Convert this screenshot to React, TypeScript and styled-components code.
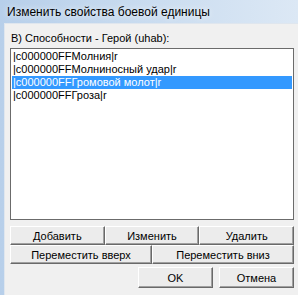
import React, {useState} from 'react'
import styled, {createGlobalStyle} from 'styled-components'

const GlobalStyle = createGlobalStyle`
  html, body {
    margin: 0;
    padding: 0;
    background: #f0f0f0;
  }
`

const Window = styled.div`
  width: 298px;
  height: 295px;
  overflow: hidden;
  display: flex;
  flex-direction: column;
  background: linear-gradient(90deg, #b7cfea 0%, #c8dbef 45%, #dce8f5 100%);
  font-family: "Liberation Sans", Arial, sans-serif;
`

const TitleBar = styled.div`
  height: 23px;
  flex: 0 0 23px;
  display: flex;
  align-items: center;
  padding-left: 7px;
  font-family: "Liberation Sans", Arial, sans-serif;
  font-size: 12px;
  color: #000;
  text-shadow: 0 0 6px rgba(255, 255, 255, 0.9);
`

const Body = styled.div`
  flex: 1;
  display: flex;
  padding-left: 4px;
`

const Client = styled.div`
  flex: 1;
  background: #f0f0f0;
  border-left: 1px solid #dfe6ee;
  border-top: 1px solid #dfe6ee;
  display: flex;
  flex-direction: column;
  padding: 8px 4px 0 5px;
`

const GroupLabel = styled.div`
  font-size: 11px;
  line-height: 13px;
  color: #000;
  margin: 0 0 2px 1px;
  height: 14px;
`

const ListBox = styled.div`
  height: 168px;
  background: #fff;
  border: 1px solid #6b6b6b;
  padding: 1px;
  display: flex;
  flex-direction: column;
`

const Item = styled.div<{ $selected?: boolean }>`
  height: 13px;
  line-height: 13px;
  font-size: 11px;
  padding-left: 1px;
  white-space: nowrap;
  background: ${p => p.$selected ? '#3399ff' : 'transparent'};
  color: ${p => p.$selected ? '#fff' : '#000'};
`

const ButtonRow = styled.div<{ $cols: number }>`
  display: grid;
  grid-template-columns: repeat(${p => p.$cols}, 1fr);
`

const Rows = styled.div`
  margin-top: 6px;
  display: flex;
  flex-direction: column;
`

const WinButton = styled.button`
  height: 19px;
  padding: 0;
  margin: 0;
  font-family: "Liberation Sans", Arial, sans-serif;
  font-size: 11px;
  color: #000;
  background: #ececec;
  border: 1px solid;
  border-color: #fff #696969 #696969 #fff;
  box-shadow: inset -1px -1px 0 #a0a0a0;
`

const Footer = styled.div`
  display: flex;
  justify-content: flex-end;
  gap: 6px;
  margin-top: 3px;
`

const DialogButton = styled(WinButton)`
  width: 75px;
  height: 21px;
`

const items = [
    '|c000000FFМолния|r',
    '|c000000FFМолниносный удар|r',
    '|c000000FFГромовой молот|r',
    '|c000000FFГроза|r',
]

const App: React.FC = () => {
    const [selected, setSelected] = useState<number>(2)

    return <>
        <GlobalStyle/>
        <Window>
            <TitleBar>Изменить свойства боевой единицы</TitleBar>
            <Body>
                <Client>
                    <GroupLabel>B) Способности - Герой (uhab):</GroupLabel>
                    <ListBox>
                        {
                            items.map((text, i) =>
                                <Item key={i} $selected={i === selected} onClick={() => setSelected(i)}>{text}</Item>)
                        }
                    </ListBox>
                    <Rows>
                        <ButtonRow $cols={3}>
                            <WinButton>Добавить</WinButton>
                            <WinButton>Изменить</WinButton>
                            <WinButton>Удалить</WinButton>
                        </ButtonRow>
                        <ButtonRow $cols={2}>
                            <WinButton>Переместить вверх</WinButton>
                            <WinButton>Переместить вниз</WinButton>
                        </ButtonRow>
                    </Rows>
                    <Footer>
                        <DialogButton>OK</DialogButton>
                        <DialogButton>Отмена</DialogButton>
                    </Footer>
                </Client>
            </Body>
        </Window>
    </>
}

export default App
